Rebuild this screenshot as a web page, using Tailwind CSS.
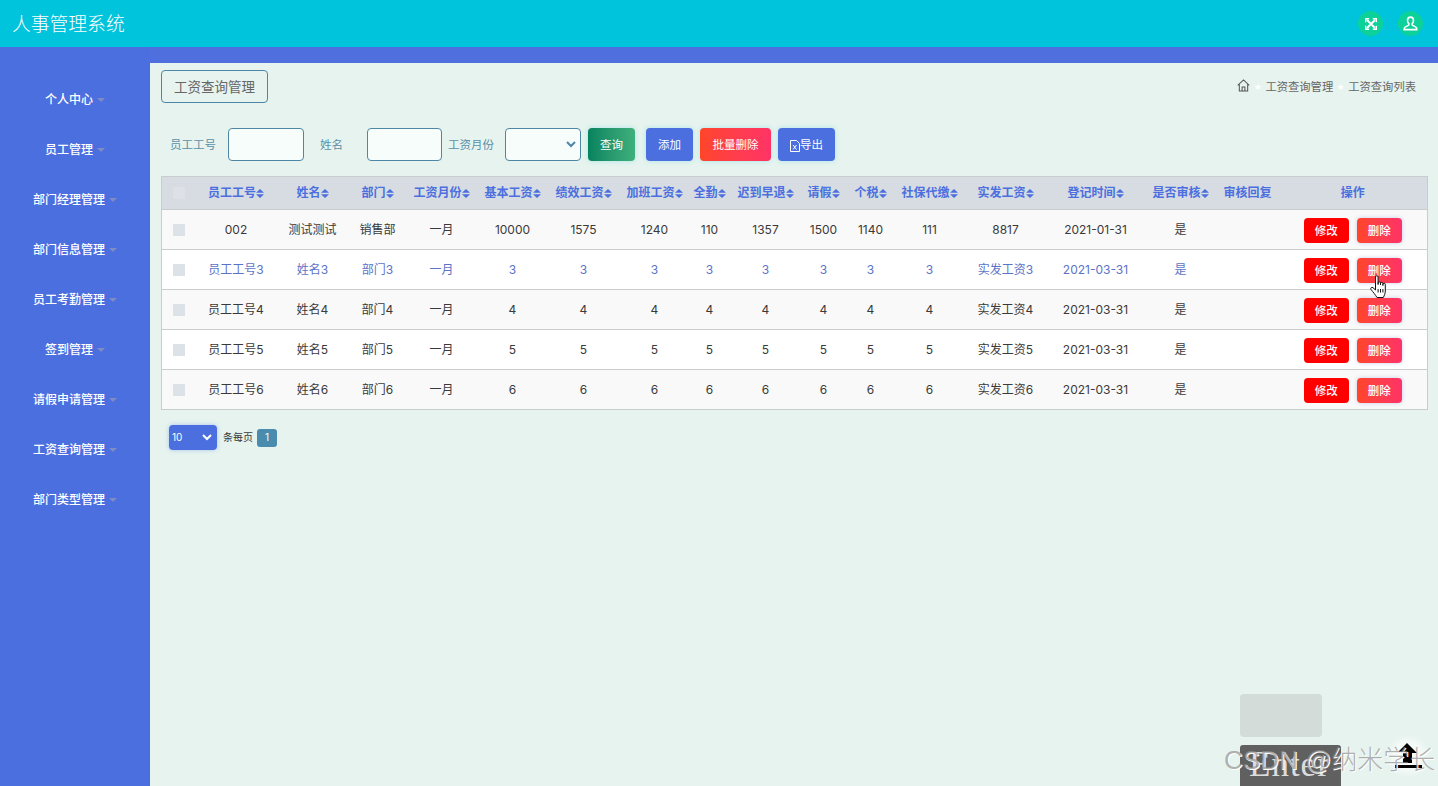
<!DOCTYPE html>
<html lang="zh">
<head>
<meta charset="utf-8">
<script src="https://cdn.jsdelivr.net/npm/@tailwindcss/browser@4"></script>
<title>人事管理系统</title>
</head>
<body class="relative h-[786px] w-[1438px] overflow-hidden bg-[#e6f3ee] font-['Inter','Noto_Sans_CJK_SC',sans-serif] text-xs text-[#3a3a3a]">

<svg class="hidden"><defs>
<g id="sort"><path d="M4 0 8 3.800H0Z M0 5.200H8L4 9Z"/></g>
</defs></svg>

<header class="flex h-[47px] items-center justify-between bg-[#00c4dc] pl-3 pr-[15px]">
  <h1 class="pt-[2px] text-[18.800px] font-light text-white">人事管理系统</h1>
  <div class="flex gap-[15px]">
    <button class="flex h-[25px] w-[25px] items-center justify-center rounded-full bg-[#0cd199]">
      <svg viewBox="0 0 12 12" class="h-3 w-3" fill="none" stroke="white" stroke-width="1.900"><path d="M2 2 10 10M10 2 2 10"/><path d="M.7 4.200V.7H4.200M7.800 .7h3.500V4.200M11.300 7.800v3.500H7.800M4.200 11.300H.7V7.800" stroke-width="1.400"/></svg>
    </button>
    <button class="flex h-[25px] w-[25px] items-center justify-center rounded-full bg-[#0cd199]">
      <svg viewBox="0 0 14 14" class="h-[15px] w-[15px]" fill="none" stroke="white" stroke-width="1.500"><path d="M7 1C5.200 1 4.200 2.400 4.200 4.200c0 1.400.6 2.400 1.300 3 .3.7 0 1.200-.6 1.600L2 10.400c-.8.5-.9 1-.9 2.300h11.800c0-1.300-.1-1.800-.9-2.300L9.100 8.800c-.6-.4-.9-.9-.6-1.600.7-.6 1.300-1.600 1.300-3C9.800 2.400 8.800 1 7 1Z"/></svg>
    </button>
  </div>
</header>

<div class="flex h-[739px] bg-[#4f6fde]">
  <nav class="flex w-[150px] shrink-0 flex-col bg-[#4c6fdf] pt-[28px] text-xs font-medium text-white">
    <a class="flex h-[50px] items-center justify-center gap-1">个人中心<i class="h-0 w-0 border-x-[4px] border-t-[4px] border-x-transparent border-t-[#7d8cc4]"></i></a>
    <a class="flex h-[50px] items-center justify-center gap-1">员工管理<i class="h-0 w-0 border-x-[4px] border-t-[4px] border-x-transparent border-t-[#7d8cc4]"></i></a>
    <a class="flex h-[50px] items-center justify-center gap-1">部门经理管理<i class="h-0 w-0 border-x-[4px] border-t-[4px] border-x-transparent border-t-[#7d8cc4]"></i></a>
    <a class="flex h-[50px] items-center justify-center gap-1">部门信息管理<i class="h-0 w-0 border-x-[4px] border-t-[4px] border-x-transparent border-t-[#7d8cc4]"></i></a>
    <a class="flex h-[50px] items-center justify-center gap-1">员工考勤管理<i class="h-0 w-0 border-x-[4px] border-t-[4px] border-x-transparent border-t-[#7d8cc4]"></i></a>
    <a class="flex h-[50px] items-center justify-center gap-1">签到管理<i class="h-0 w-0 border-x-[4px] border-t-[4px] border-x-transparent border-t-[#7d8cc4]"></i></a>
    <a class="flex h-[50px] items-center justify-center gap-1">请假申请管理<i class="h-0 w-0 border-x-[4px] border-t-[4px] border-x-transparent border-t-[#7d8cc4]"></i></a>
    <a class="flex h-[50px] items-center justify-center gap-1">工资查询管理<i class="h-0 w-0 border-x-[4px] border-t-[4px] border-x-transparent border-t-[#7d8cc4]"></i></a>
    <a class="flex h-[50px] items-center justify-center gap-1">部门类型管理<i class="h-0 w-0 border-x-[4px] border-t-[4px] border-x-transparent border-t-[#7d8cc4]"></i></a>
  </nav>

  <main class="mt-4 flex-1 bg-[#e6f3ee] pl-[11px] pr-[10px] pt-[7px]">
    <div class="flex items-center justify-between">
      <div class="flex h-[33px] w-[107px] items-center justify-center rounded border border-[#4d87a5] pt-[2px] text-[13.500px] text-[#666]">工资查询管理</div>
      <div class="flex items-center pr-[12px] pt-[2px] text-[11.300px] text-[#666]">
        <svg viewBox="0 0 14 14" class="mb-1 h-[13px] w-[13px]" fill="none" stroke="#555" stroke-width="1.100"><path d="M.8 6.800 7 1l6.200 5.800M2.500 5.500V13h9V5.500M5.500 13V8.500h3V13"/></svg>
        <span class="w-[15px] text-center text-[8px] text-white">★</span>
        <span>工资查询管理</span>
        <span class="w-[15px] text-center text-[8px] text-white">★</span>
        <span>工资查询列表</span>
      </div>
    </div>

    <form class="mt-[25px] flex h-[33px] items-center text-[11.500px] text-[#5b8fa8]">
      <label class="ml-[9px] w-[58px] pt-[2px]">员工工号</label>
      <input class="h-[33px] w-[76px] rounded border border-[#4d87a5] bg-[#f6fdfb]">
      <label class="ml-4 w-[47px] pt-[2px]">姓名</label>
      <input class="h-[33px] w-[75px] rounded border border-[#4d87a5] bg-[#f6fdfb]">
      <label class="ml-1.5 w-[57px] pt-[2px]">工资月份</label>
      <div class="relative h-[33px] w-[76px]">
        <select class="h-full w-full appearance-none rounded border border-[#4d87a5] bg-[#f6fdfb]"></select>
        <svg viewBox="0 0 10 7" class="absolute right-[5px] top-[13px] h-[7px] w-[10px]" fill="none" stroke="#4d87a5" stroke-width="2"><path d="M1 1l4 4 4-4"/></svg>
      </div>
      <button type="button" class="ml-[7px] h-[33px] w-[47px] rounded bg-gradient-to-r from-[#05835f] to-[#3eb07c] pt-[2px] text-white shadow-[0_0_5px_#a8e4ea]">查询</button>
      <button type="button" class="ml-[11px] h-[33px] w-[47px] rounded bg-[#4c6fdf] pt-[2px] text-white shadow-[0_0_5px_#a8e4ea]">添加</button>
      <button type="button" class="ml-[7px] h-[33px] w-[71px] rounded bg-gradient-to-r from-[#ff4527] to-[#ff3366] pt-[2px] text-white shadow-[0_0_5px_#a8e4ea]">批量删除</button>
      <button type="button" class="ml-[7px] flex h-[33px] w-[57px] items-center justify-center rounded bg-[#4c6fdf] pt-[2px] text-white shadow-[0_0_5px_#a8e4ea]">
        <svg viewBox="0 0 10 12" class="h-3 w-2.5" fill="none" stroke="white"><path d="M.5.5h6l3 3v8h-9Z"/><path d="M3 5l3.500 4.500M6.500 5 3 9.500"/></svg>导出
      </button>
    </form>

    <table class="mt-[15px] w-[1266px] table-fixed border border-[#c9cdcd] text-center">
      <colgroup>
        <col class="w-[36px]"><col class="w-[77px]"><col class="w-[76px]"><col class="w-[54px]"><col class="w-[74px]"><col class="w-[68px]"><col class="w-[74px]"><col class="w-[68px]"><col class="w-[42px]"><col class="w-[70px]"><col class="w-[46px]"><col class="w-[48px]"><col class="w-[70px]"><col class="w-[82px]"><col class="w-[98px]"><col class="w-[72px]"><col class="w-[62px]"><col class="w-[149px]">
      </colgroup>
      <thead>
        <tr class="h-[33px] border-b border-[#c9cdcd] bg-[#d6dce1] text-[#4c6fdf]">
          <th class="font-semibold"><span class="ml-[-1px] block h-3 w-3 translate-x-[12px] bg-[#dde1e5]"></span></th>
          <th class="font-semibold whitespace-nowrap">员工工号<svg viewBox="0 0 8 9" class="inline h-[9px] w-2" fill="#4c6fdf"><use href="#sort"/></svg></th>
          <th class="font-semibold whitespace-nowrap">姓名<svg viewBox="0 0 8 9" class="inline h-[9px] w-2" fill="#4c6fdf"><use href="#sort"/></svg></th>
          <th class="font-semibold whitespace-nowrap">部门<svg viewBox="0 0 8 9" class="inline h-[9px] w-2" fill="#4c6fdf"><use href="#sort"/></svg></th>
          <th class="font-semibold whitespace-nowrap">工资月份<svg viewBox="0 0 8 9" class="inline h-[9px] w-2" fill="#4c6fdf"><use href="#sort"/></svg></th>
          <th class="font-semibold whitespace-nowrap">基本工资<svg viewBox="0 0 8 9" class="inline h-[9px] w-2" fill="#4c6fdf"><use href="#sort"/></svg></th>
          <th class="font-semibold whitespace-nowrap">绩效工资<svg viewBox="0 0 8 9" class="inline h-[9px] w-2" fill="#4c6fdf"><use href="#sort"/></svg></th>
          <th class="font-semibold whitespace-nowrap">加班工资<svg viewBox="0 0 8 9" class="inline h-[9px] w-2" fill="#4c6fdf"><use href="#sort"/></svg></th>
          <th class="font-semibold whitespace-nowrap">全勤<svg viewBox="0 0 8 9" class="inline h-[9px] w-2" fill="#4c6fdf"><use href="#sort"/></svg></th>
          <th class="font-semibold whitespace-nowrap">迟到早退<svg viewBox="0 0 8 9" class="inline h-[9px] w-2" fill="#4c6fdf"><use href="#sort"/></svg></th>
          <th class="font-semibold whitespace-nowrap">请假<svg viewBox="0 0 8 9" class="inline h-[9px] w-2" fill="#4c6fdf"><use href="#sort"/></svg></th>
          <th class="font-semibold whitespace-nowrap">个税<svg viewBox="0 0 8 9" class="inline h-[9px] w-2" fill="#4c6fdf"><use href="#sort"/></svg></th>
          <th class="font-semibold whitespace-nowrap">社保代缴<svg viewBox="0 0 8 9" class="inline h-[9px] w-2" fill="#4c6fdf"><use href="#sort"/></svg></th>
          <th class="font-semibold whitespace-nowrap">实发工资<svg viewBox="0 0 8 9" class="inline h-[9px] w-2" fill="#4c6fdf"><use href="#sort"/></svg></th>
          <th class="font-semibold whitespace-nowrap">登记时间<svg viewBox="0 0 8 9" class="inline h-[9px] w-2" fill="#4c6fdf"><use href="#sort"/></svg></th>
          <th class="font-semibold whitespace-nowrap">是否审核<svg viewBox="0 0 8 9" class="inline h-[9px] w-2" fill="#4c6fdf"><use href="#sort"/></svg></th>
          <th class="font-semibold whitespace-nowrap">审核回复</th>
          <th class="font-semibold whitespace-nowrap">操作</th>
        </tr>
      </thead>
      <tbody>
        <tr class="h-10 border-b border-[#c9cdcd] bg-[#f9f9f9]">
          <td><span class="block h-3 w-3 translate-x-[11px] bg-[#dde1e8]"></span></td>
          <td>002</td><td>测试测试</td><td>销售部</td><td>一月</td><td>10000</td><td>1575</td><td>1240</td><td>110</td><td>1357</td><td>1500</td><td>1140</td><td>111</td><td>8817</td><td>2021-01-31</td><td>是</td><td></td>
          <td><div class="flex justify-center gap-2 pt-[2px]"><button class="h-[25px] w-[45px] rounded bg-[#ff0000] pt-[2px] text-[11.500px] font-medium text-white">修改</button><button class="h-[25px] w-[45px] rounded bg-gradient-to-r from-[#ff4527] to-[#ff3366] pt-[2px] text-[11.500px] font-medium text-white shadow-[0_0_4px_#c9c9ee]">删除</button></div></td>
        </tr>
        <tr class="h-10 border-b border-[#c9cdcd] bg-white text-[#5b73c7]">
          <td><span class="block h-3 w-3 translate-x-[11px] bg-[#dde1e8]"></span></td>
          <td>员工工号3</td><td>姓名3</td><td>部门3</td><td>一月</td><td>3</td><td>3</td><td>3</td><td>3</td><td>3</td><td>3</td><td>3</td><td>3</td><td>实发工资3</td><td>2021-03-31</td><td>是</td><td></td>
          <td><div class="flex justify-center gap-2 pt-[2px]"><button class="h-[25px] w-[45px] rounded bg-[#ff0000] pt-[2px] text-[11.500px] font-medium text-white">修改</button><button class="h-[25px] w-[45px] rounded bg-gradient-to-r from-[#ff4527] to-[#ff3366] pt-[2px] text-[11.500px] font-medium text-white shadow-[0_0_4px_#c9c9ee]">删除</button></div></td>
        </tr>
        <tr class="h-10 border-b border-[#c9cdcd] bg-[#f9f9f9]">
          <td><span class="block h-3 w-3 translate-x-[11px] bg-[#dde1e8]"></span></td>
          <td>员工工号4</td><td>姓名4</td><td>部门4</td><td>一月</td><td>4</td><td>4</td><td>4</td><td>4</td><td>4</td><td>4</td><td>4</td><td>4</td><td>实发工资4</td><td>2021-03-31</td><td>是</td><td></td>
          <td><div class="flex justify-center gap-2 pt-[2px]"><button class="h-[25px] w-[45px] rounded bg-[#ff0000] pt-[2px] text-[11.500px] font-medium text-white">修改</button><button class="h-[25px] w-[45px] rounded bg-gradient-to-r from-[#ff4527] to-[#ff3366] pt-[2px] text-[11.500px] font-medium text-white shadow-[0_0_4px_#c9c9ee]">删除</button></div></td>
        </tr>
        <tr class="h-10 border-b border-[#c9cdcd] bg-white">
          <td><span class="block h-3 w-3 translate-x-[11px] bg-[#dde1e8]"></span></td>
          <td>员工工号5</td><td>姓名5</td><td>部门5</td><td>一月</td><td>5</td><td>5</td><td>5</td><td>5</td><td>5</td><td>5</td><td>5</td><td>5</td><td>实发工资5</td><td>2021-03-31</td><td>是</td><td></td>
          <td><div class="flex justify-center gap-2 pt-[2px]"><button class="h-[25px] w-[45px] rounded bg-[#ff0000] pt-[2px] text-[11.500px] font-medium text-white">修改</button><button class="h-[25px] w-[45px] rounded bg-gradient-to-r from-[#ff4527] to-[#ff3366] pt-[2px] text-[11.500px] font-medium text-white shadow-[0_0_4px_#c9c9ee]">删除</button></div></td>
        </tr>
        <tr class="h-10 bg-[#f9f9f9]">
          <td><span class="block h-3 w-3 translate-x-[11px] bg-[#dde1e8]"></span></td>
          <td>员工工号6</td><td>姓名6</td><td>部门6</td><td>一月</td><td>6</td><td>6</td><td>6</td><td>6</td><td>6</td><td>6</td><td>6</td><td>6</td><td>实发工资6</td><td>2021-03-31</td><td>是</td><td></td>
          <td><div class="flex justify-center gap-2 pt-[2px]"><button class="h-[25px] w-[45px] rounded bg-[#ff0000] pt-[2px] text-[11.500px] font-medium text-white">修改</button><button class="h-[25px] w-[45px] rounded bg-gradient-to-r from-[#ff4527] to-[#ff3366] pt-[2px] text-[11.500px] font-medium text-white shadow-[0_0_4px_#c9c9ee]">删除</button></div></td>
        </tr>
      </tbody>
    </table>

    <div class="ml-2 mt-[15px] flex items-center text-[10px]">
      <div class="relative h-[25px] w-12">
        <select class="h-full w-full appearance-none rounded bg-[#4c6fdf] pl-[3px] text-[10px] text-white shadow-[0_0_4px_#a8c4f0]"><option>10</option></select>
        <svg viewBox="0 0 10 7" class="absolute right-[5px] top-[9px] h-[7px] w-[10px]" fill="none" stroke="white" stroke-width="2"><path d="M1 1l4 4 4-4"/></svg>
      </div>
      <span class="ml-1.5">条每页</span>
      <span class="ml-1 flex h-[18px] w-5 items-center justify-center rounded-[3px] bg-[#4a8cad] text-white">1</span>
    </div>
  </main>
</div>

<!-- pointer over the delete button of row 2 -->
<svg viewBox="0 0 18 23" class="absolute left-[1370px] top-[275px] h-[23px] w-[18px]" fill="white" stroke="#111" stroke-width="1"><path d="M5.500 2a1.300 1.300 0 0 1 2.600 0V9.500V8a1.200 1.200 0 0 1 2.400 0V10V8.600a1.200 1.200 0 0 1 2.400 0V10.500V9.400a1.200 1.200 0 0 1 2.400.1V16c0 2.500-1 4.500-2 6.500H7C5.500 20 3 17 1 14.500c-1-1.400.8-2.800 2-1.800L5.500 15Z"/><path d="M8.100 14V17.500M10.500 14V17.500M12.900 14V17.500" fill="none"/></svg>

<!-- floating widgets and watermark -->
<div class="absolute left-[1240px] top-[694px] h-[43px] w-[82px] rounded bg-[#d3dcd8]"></div>
<div class="absolute left-[1240px] top-[745px] h-[41px] w-[101px] overflow-hidden rounded-t-[3px] bg-[#5f605f] pl-[9px] font-['Liberation_Serif',serif] text-[35px] leading-[40px] tracking-[1px] text-[#dcdcdc]">Enter</div>
<div class="absolute left-[1390px] top-[738px] h-9 w-9 rounded-full bg-white/60 blur-[3px]"></div>
<svg viewBox="0 0 28 26" class="absolute left-[1395px] top-[743px] h-[26px] w-[28px]" fill="#000"><path d="M12 0 22 10H17V20H8V10H2Z"/><path d="M0 22H27V25H0Z"/></svg>
<div class="absolute left-[1224px] top-[741px] whitespace-nowrap font-['Liberation_Sans','Noto_Sans_CJK_SC',sans-serif] text-[26px] font-light leading-[38px] text-[#8f8f8f]/70 [text-shadow:1px_1px_0_#ffffff]">CSDN @纳米学长</div>

</body>
</html>
